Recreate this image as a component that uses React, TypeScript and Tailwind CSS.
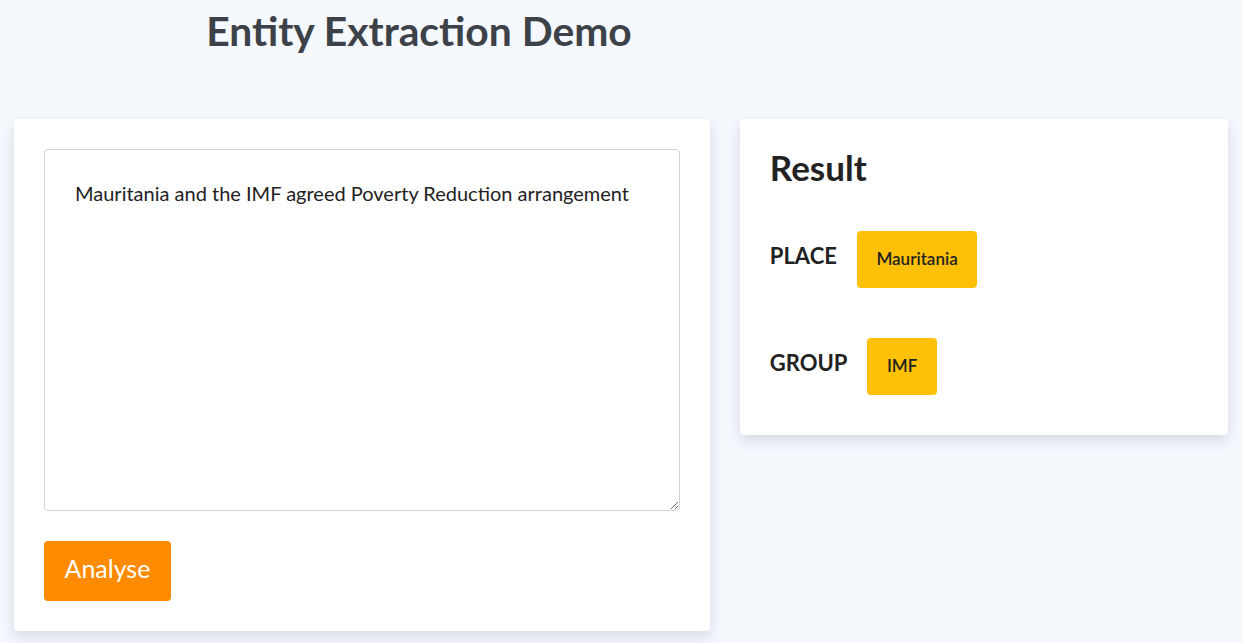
import React, { useState } from "react";

type Entity = { label: string; values: string[] };

const entities: Entity[] = [
  { label: "PLACE", values: ["Mauritania"] },
  { label: "GROUP", values: ["IMF"] },
];

const App = () => {
  const [text, setText] = useState(
    "Mauritania and the IMF agreed Poverty Reduction arrangement"
  );

  return (
    <div
      className="min-h-screen bg-[#f5f8fd] px-[14px] pt-[7px]"
      style={{ fontFamily: "Lato, 'Noto Sans', sans-serif" }}
    >
      <h1 className="w-[810px] text-center text-[40.8px] font-bold leading-[1.2] text-[#3c4248]">
        Entity Extraction Demo
      </h1>

      <div className="mt-[63px] flex items-start gap-[30px]">
        {/* input card */}
        <div className="w-[697px] rounded-[4px] bg-white p-[30px] shadow-[0_6px_14px_rgba(40,55,80,0.15)]">
          <textarea
            value={text}
            onChange={(e) => setText(e.target.value)}
            className="block h-[362px] w-full rounded-[4px] border border-[#cfd3d8] px-[30px] pt-[28px] text-[20px] leading-[1.5] text-[#222] outline-none"
          />
          <button className="mt-[30px] flex h-[60px] items-center rounded-[4px] bg-[#ff8c00] px-[20.5px] pb-[5px] text-[25px] leading-none text-white">
            Analyse
          </button>
        </div>

        {/* result card */}
        <div className="w-[489px] rounded-[4px] bg-white px-[30px] pt-[27px] pb-[40px] shadow-[0_6px_14px_rgba(40,55,80,0.15)]">
          <h2 className="text-[35px] font-bold leading-[1.2] text-[#222]">
            Result
          </h2>
          <div className="mt-[43px] flex flex-col gap-[50px]">
            {entities.map((ent) => (
              <div key={ent.label} className="flex items-center gap-[20px]">
                <span className="pb-[6px] text-[22px] font-bold leading-[1.2] text-[#222]">
                  {ent.label}
                </span>
                {ent.values.map((v) => (
                  <span
                    key={v}
                    className="flex h-[57px] items-center rounded-[4px] bg-[#ffc107] px-[19.5px] pb-[2px] text-[17px] font-semibold text-[#222]"
                  >
                    {v}
                  </span>
                ))}
              </div>
            ))}
          </div>
        </div>
      </div>
    </div>
  );
};

export default App;
